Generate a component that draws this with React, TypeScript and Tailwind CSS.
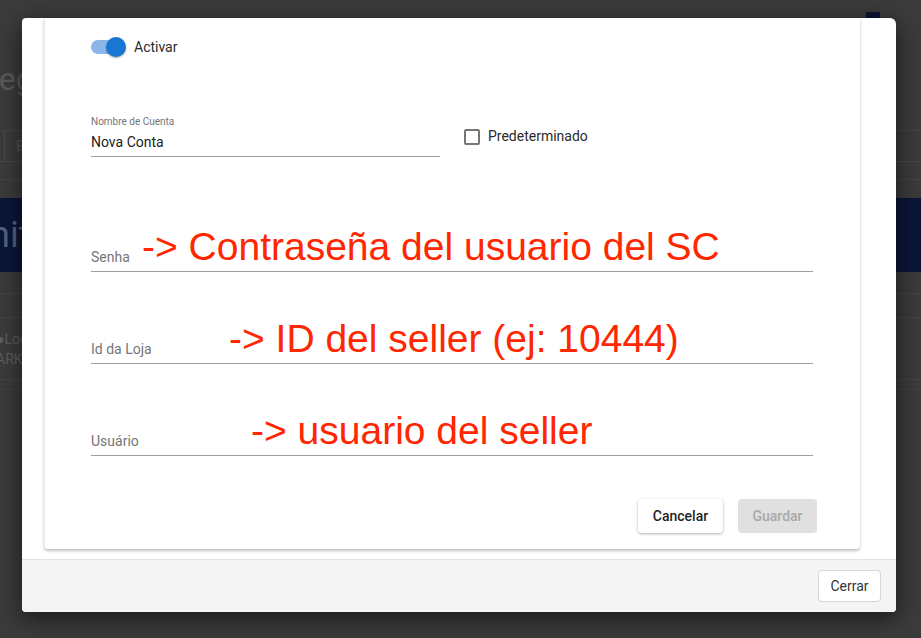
import React from "react";

function Field({
  label,
  height,
  note,
  noteLeft,
}: {
  label: string;
  height: string;
  note: string;
  noteLeft: string;
}) {
  return (
    <div className={`relative flex items-end ${height} border-b border-[#9e9e9e] pb-[4px]`}>
      <span className="text-[14px] leading-[20px] text-[#757575]">{label}</span>
      <span
        className={`absolute ${noteLeft} bottom-[5px] whitespace-nowrap text-[39px] leading-none text-[#ff2600]`}
        style={{ fontFamily: '"Liberation Sans", Arial, sans-serif' }}
      >
        {note}
      </span>
    </div>
  );
}

export default function App() {
  return (
    <div
      className="relative w-[921px] h-[638px] overflow-hidden bg-[#3b3b3b]"
      style={{ fontFamily: 'Roboto, "Noto Sans", sans-serif' }}
    >
      {/* dimmed page behind the dialog */}
      <div className="flex flex-col w-[921px] h-[638px]">
        <div className="h-[12px]" />
        <div className="flex justify-end pr-[41px]">
          <div className="w-[14px] h-[8px] bg-[#0b1434]" />
        </div>
        <div className="h-[34px]" />
        <div className="h-[50px] flex items-center overflow-hidden">
          <span className="text-[32px] text-[#5b5b5b] ml-[-21px] whitespace-nowrap">Registro</span>
        </div>
        <div className="h-[27px] border-b border-[#444]" />
        <div className="h-[31px] flex border-b border-[#464646]">
          <div className="w-[5px] border-r border-[#4a4a4a]" />
          <span className="ml-[11px] text-[14px] leading-[31px] text-[#555]">B</span>
        </div>
        <div className="h-[18px] border-b border-[#444]" />
        <div className="h-[18px]" />
        <div className="h-[74px] bg-[#0b1536] flex items-center overflow-hidden">
          <span className="text-[36px] text-[#56607d] ml-[-10px] whitespace-nowrap">nit</span>
        </div>
        <div className="h-[22px] border-b border-[#444]" />
        <div className="h-[24px] border-b border-[#444]" />
        <div className="h-[62px] flex flex-col justify-center text-[14px] leading-[20px] text-[#5e5e5e] border-b border-[#444]">
          <span className="whitespace-nowrap ml-[-4px]">●Log</span>
          <span className="whitespace-nowrap ml-[-4px]">ARK</span>
        </div>
        <div className="h-[10px] border-b border-[#424242]" />
      </div>

      {/* dialog */}
      <div className="absolute left-[22px] top-[18px] w-[874px] h-[594px] bg-white rounded-tr-[6px] rounded-sm shadow-[0_6px_24px_rgba(0,0,0,0.6)] flex flex-col overflow-hidden">
        <div className="flex-1 pl-[22px] pr-[36px] pb-[10px] flex">
          <div className="flex-1 flex flex-col rounded-b-[4px] border-l border-[#ececec] shadow-[0_2px_3px_rgba(0,0,0,0.25)] pl-[46px] pr-[47px] pt-[19px] pb-[16px]">
            {/* toggle */}
            <div className="flex items-center h-[20px]">
              <div className="relative w-[34px] h-[20px] flex items-center">
                <div className="w-[34px] h-[14px] rounded-full bg-[#8cb6e9]" />
                <div className="absolute right-[-1px] top-0 w-[20px] h-[20px] rounded-full bg-[#1976d2] shadow-[0_1px_2px_rgba(0,0,0,0.35)]" />
              </div>
              <span className="ml-[9px] text-[14px] text-[#2b2b2b]">Activar</span>
            </div>

            {/* nombre + checkbox */}
            <div className="flex items-center mt-[59px]">
              <div className="w-[349px] flex flex-col border-b border-[#9e9e9e] pb-[4px]">
                <span className="text-[10px] leading-[12px] text-[#757575]">Nombre de Cuenta</span>
                <span className="mt-[4px] text-[14px] leading-[20px] text-[#222]">Nova Conta</span>
              </div>
              <div className="ml-[24px] w-[16px] h-[16px] border-2 border-[#757575] rounded-[2px]" />
              <span className="ml-[8px] text-[14px] text-[#2b2b2b]">Predeterminado</span>
            </div>

            <Field label="Senha" height="h-[115px]" note="-> Contraseña del usuario del SC" noteLeft="left-[51px]" />
            <Field label="Id da Loja" height="h-[92px]" note="-> ID del seller (ej: 10444)" noteLeft="left-[138px]" />
            <Field label="Usuário" height="h-[92px]" note="-> usuario del seller" noteLeft="left-[160px]" />

            <div className="flex-1" />
            <div className="flex justify-end gap-[15px] mr-[-4px]">
              <button className="w-[85px] h-[34px] rounded-[4px] bg-white text-[14px] font-medium text-[#1f1f1f] shadow-[0_1px_3px_rgba(0,0,0,0.3)]">
                Cancelar
              </button>
              <button className="w-[79px] h-[34px] rounded-[4px] bg-[#e0e0e0] text-[14px] font-medium text-[#a8a8a8]">
                Guardar
              </button>
            </div>
          </div>
        </div>
        <div className="h-[53px] shrink-0 bg-[#f4f4f4] border-t border-[#e3e3e3] flex items-center justify-end pr-[15px]">
          <button className="w-[63px] h-[32px] rounded-[4px] bg-white border border-[#d6d6d6] text-[14px] text-[#333]">
            Cerrar
          </button>
        </div>
      </div>
    </div>
  );
}
